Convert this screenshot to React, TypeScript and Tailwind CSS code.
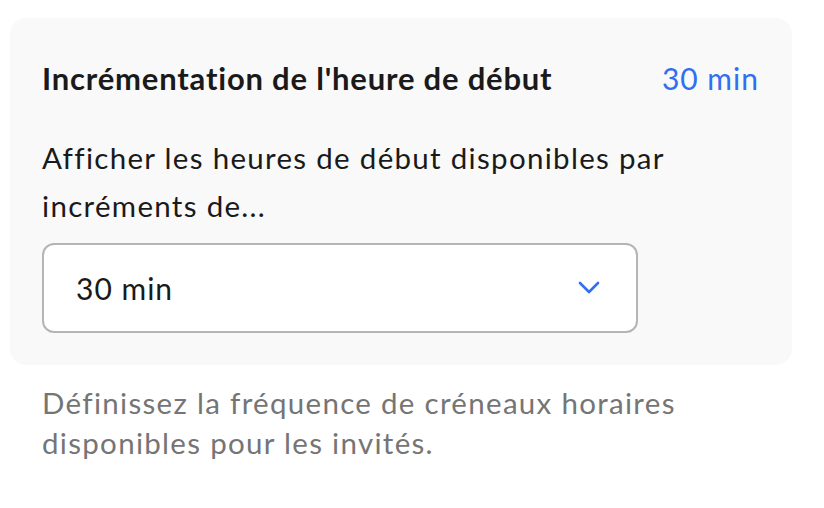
import React from 'react';

function App() {
  return (
    <div className="min-h-screen bg-white pt-[18px] pl-[10px]" style={{ fontFamily: 'Lato, "Open Sans", sans-serif' }}>
      <div className="w-[782px]">
        {/* Card */}
        <div className="bg-[#f9f9f9] rounded-2xl pl-[32px] pr-[33px] pt-[42px] pb-[32px]">
          <div className="flex items-center justify-between">
            <h2 className="text-[31px] leading-[36px] font-bold text-[#1a1a1a] tracking-[0.8px]">
              Incrémentation de l'heure de début
            </h2>
            <span className="text-[30px] leading-[36px] text-[#2f6ff0] tracking-[1px]">30 min</span>
          </div>
          <p className="mt-[38px] text-[29.5px] leading-[48px] text-[#1a1a1a] w-[700px] tracking-[1.3px]">
            Afficher les heures de début disponibles par incréments de...
          </p>
          <button className="mt-[13px] flex items-center justify-between w-[596px] h-[90px] bg-white border-2 border-[#b5b5b5] rounded-[12px] pl-[32px] pr-[36px]">
            <span className="text-[30px] text-[#1a1a1a] tracking-[1px]">30 min</span>
            <svg width="22" height="14" viewBox="0 0 22 14" fill="none">
              <path d="M2 2 L11 11 L20 2" stroke="#2f6ff0" strokeWidth="2.6" strokeLinecap="round" strokeLinejoin="round" />
            </svg>
          </button>
        </div>
        <p className="mt-[18px] pl-[32px] w-[720px] text-[29.5px] leading-[40px] text-[#757575] tracking-[1.3px]">
          Définissez la fréquence de créneaux horaires disponibles pour les invités.
        </p>
      </div>
    </div>
  );
}

export default App;
